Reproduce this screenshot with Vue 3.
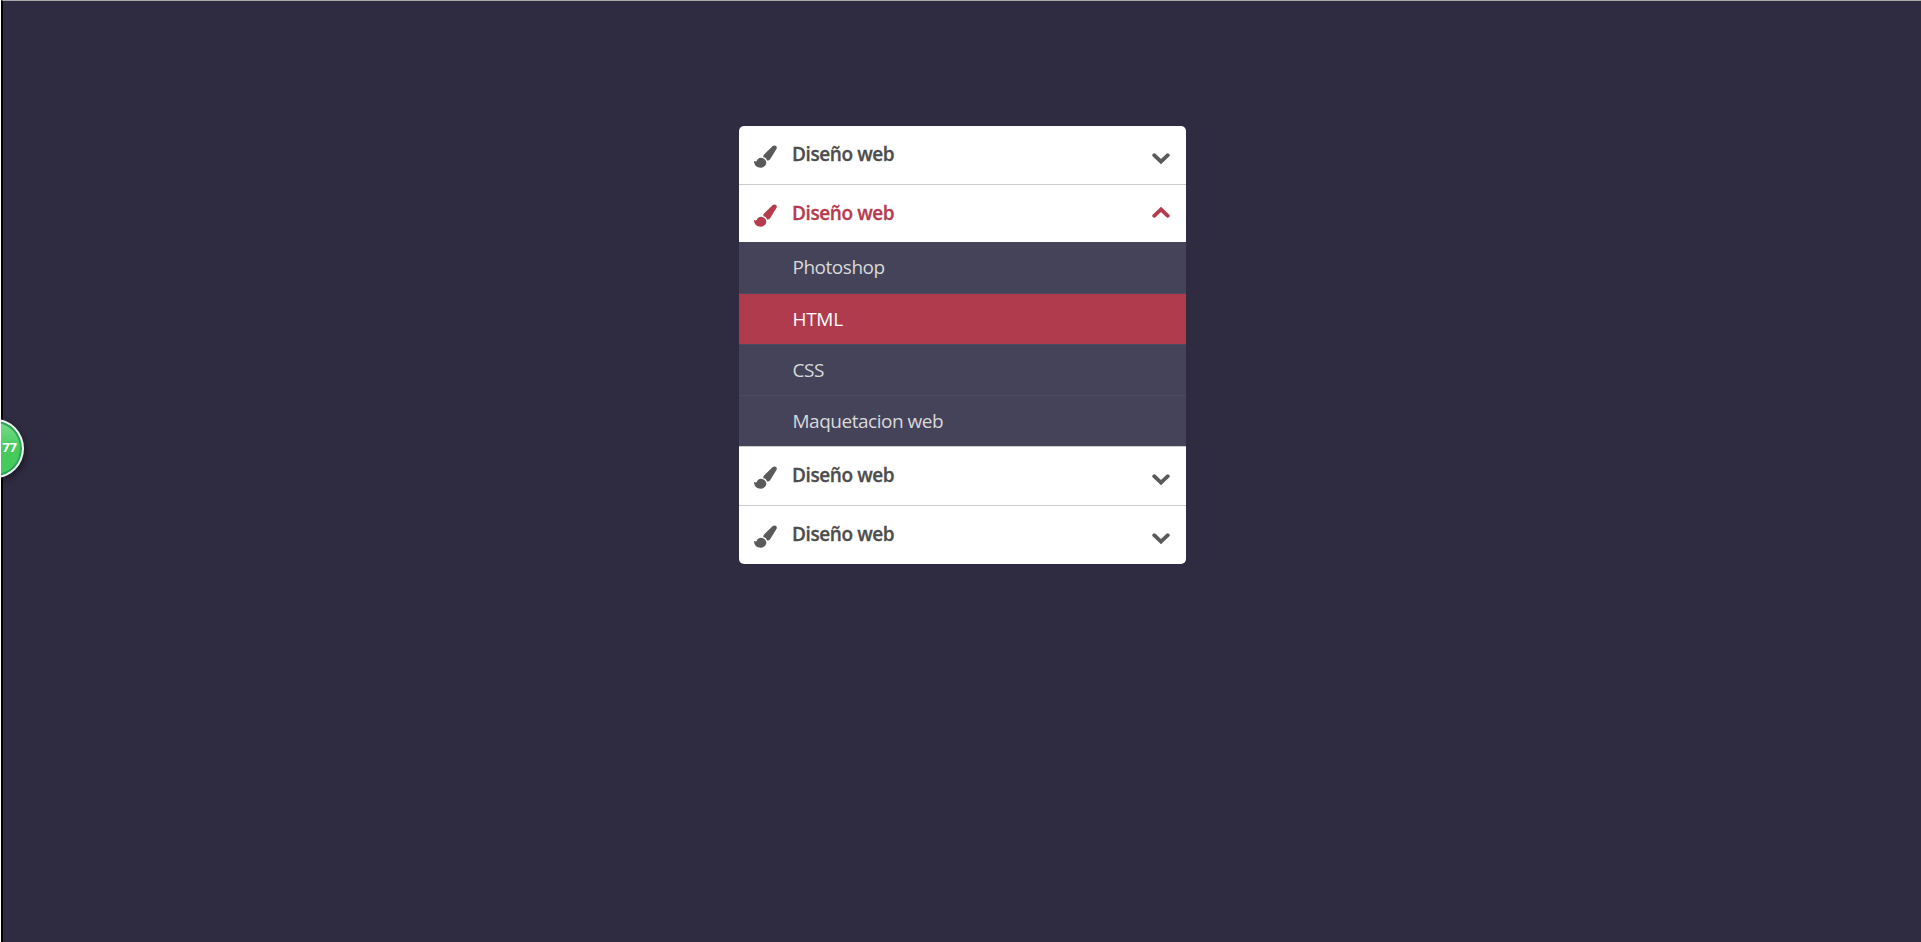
<script setup>
const sections = [
  { title: 'Diseño web', open: false, items: [] },
  {
    title: 'Diseño web',
    open: true,
    items: [
      { label: 'Photoshop' },
      { label: 'HTML', active: true },
      { label: 'CSS' },
      { label: 'Maquetacion web' },
    ],
  },
  { title: 'Diseño web', open: false, items: [] },
  { title: 'Diseño web', open: false, items: [] },
]
</script>

<template>
  <main class="page">
    <ul class="accordion">
      <li v-for="(section, i) in sections" :key="i" class="section" :class="{ open: section.open }">
        <div class="header">
          <svg class="brush" viewBox="0 0 24 24">
            <path d="M23 1C22.100.1 20.500.3 19.300 1.300L11 9.300c-1.200 1.200-1.400 2.500-1.200 3.500 1.900.2 3.400 1.700 3.800 3.400 1.300.1 2.500-.5 3.400-1.600l6.400-10.400C24.100 3 23.900 1.800 23 1z" />
            <path d="M8.300 13.500c-3-.5-4.600 1.200-5.300 3-.5.900-1.700.9-3 .200 0 4.400 3.100 7 6.900 7 3.700 0 6.300-2.700 5.900-5.700-.3-2.400-2-4.100-4.500-4.500z" />
          </svg>
          <span class="title">{{ section.title }}</span>
          <svg class="chevron" viewBox="0 0 18 12">
            <path d="M2.200 2.200 9 8.700 15.800 2.200" />
          </svg>
        </div>
        <ul v-if="section.open" class="submenu">
          <li v-for="item in section.items" :key="item.label" class="entry" :class="{ active: item.active }">
            {{ item.label }}
          </li>
        </ul>
      </li>
    </ul>
    <div class="badge-clip">
      <div class="badge">77</div>
    </div>
  </main>
</template>

<style>
body {
  background: #fff;
  overflow: hidden;
}
</style>

<style scoped>
.page {
  box-sizing: border-box;
  position: relative;
  height: 942px;
  margin-left: 1px;
  padding-top: 125px;
  border-top: 1px solid #a9a9ac;
  border-left: 2px solid #000;
  background: #2f2c41;
  font-family: "Open Sans", "Noto Sans", sans-serif;
}

ul {
  margin: 0;
  padding: 0;
  list-style: none;
}

.accordion {
  width: 447px;
  margin-left: 736px;
  border-radius: 5px;
  overflow: hidden;
  background: #fff;
}

.header {
  box-sizing: border-box;
  display: flex;
  align-items: flex-start;
  height: 59px;
  padding: 0 16px 0 15px;
  border-bottom: 1px solid #ccc;
  color: #4d4d4d;
}

.section:last-child .header {
  height: 58px;
  border-bottom: 0;
}

.open .header {
  height: 57px;
  border-bottom: 0;
  color: #b63b4d;
}

.brush {
  width: 23px;
  height: 23px;
  margin-top: 19px;
  fill: #5a5a5a;
}

.open .brush {
  fill: currentColor;
}

.title {
  flex: 1;
  margin-left: 15px;
  font-size: 19px;
  font-weight: 600;
  letter-spacing: -0.4px;
  line-height: 57px;
  -webkit-text-stroke: 0.3px currentColor;
}

.chevron {
  width: 18px;
  height: 12px;
  margin-top: 27px;
  fill: none;
  stroke: #5a5a5a;
  stroke-width: 3.8;
  stroke-linecap: round;
}

.open .chevron {
  margin-top: 21px;
  stroke: currentColor;
  transform: rotate(180deg);
}

.entry {
  height: 50px;
  padding-left: 53.500px;
  border-bottom: 1px solid #4b4a5e;
  background: #444359;
  color: #d9d9d9;
  font-size: 19px;
  letter-spacing: -0.48px;
  line-height: 50px;
}

.entry:first-child {
  height: 51px;
}

.entry:last-child {
  border-bottom-color: #ccc;
}

.entry.active {
  background: #b03b4c;
  color: #fff;
  letter-spacing: -0.3px;
}

.badge-clip {
  position: absolute;
  left: -2px;
  top: 405px;
  width: 40px;
  height: 90px;
  overflow: hidden;
}

.badge {
  box-sizing: border-box;
  position: absolute;
  left: -34px;
  top: 13px;
  width: 57px;
  height: 59px;
  padding-right: 5px;
  border: 2px solid #f2f2f2;
  border-radius: 50%;
  background: linear-gradient(#7bdc8e, #45cb5c 50%, #45cb5c);
  box-shadow: inset 0 0 0 2px #2ba55c, 2px 3px 6px rgba(0, 0, 0, 0.4);
  color: #fff;
  font-size: 13px;
  font-weight: 700;
  line-height: 53px;
  text-align: right;
}
</style>
